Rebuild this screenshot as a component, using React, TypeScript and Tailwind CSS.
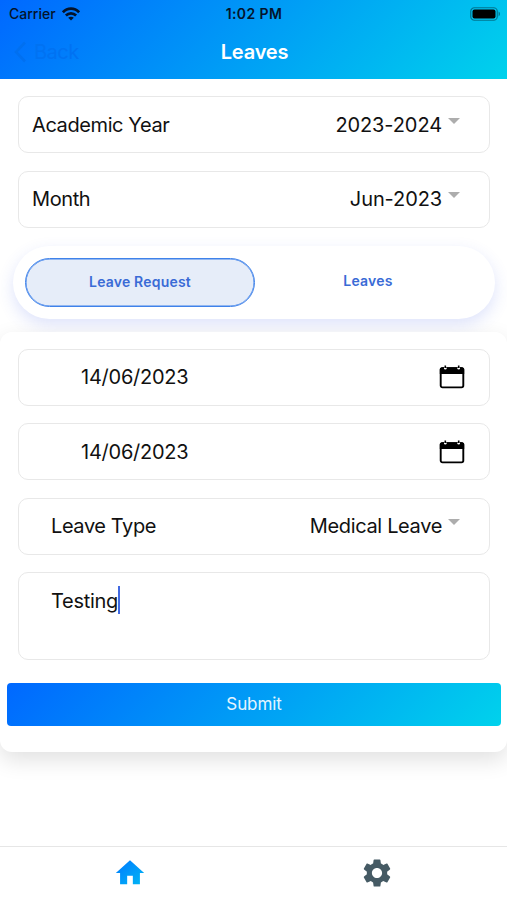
import { useState } from "react";

function WifiIcon() {
  return (
    <svg width="18" height="14" viewBox="0 0 18 14" fill="none" stroke="#04142b" strokeWidth="2.7">
      <path d="M0.9 5.3C5.4 0.5 12.6 0.5 17.1 5.3" />
      <path d="M3.9 8.5C6.8 5.6 11.2 5.6 14.1 8.5" />
      <path d="M9 13.6L6.2 10.7C7.8 9.3 10.2 9.3 11.8 10.7Z" fill="#04142b" stroke="none" />
    </svg>
  );
}

function BatteryIcon() {
  return (
    <svg width="31" height="14" viewBox="0 0 31 14" fill="none">
      <rect x="0.75" y="0.75" width="26.5" height="12.5" rx="3.6" stroke="#000" strokeOpacity="0.4" strokeWidth="1.2" />
      <rect x="2.5" y="2.5" width="23" height="9" rx="2" fill="#000" />
      <path d="M28.6 4.6C30.4 5.4 30.4 8.6 28.6 9.4Z" fill="#000" fillOpacity="0.45" />
    </svg>
  );
}

function CalendarIcon() {
  return (
    <svg width="26" height="24" viewBox="0 0 26 24">
      <rect x="1.7" y="3.2" width="22.6" height="19.2" rx="1.8" fill="#fff" stroke="#000" strokeWidth="1.9" />
      <path d="M0.8 9V4.5C0.8 3.3 1.8 2.3 3 2.3H23C24.2 2.3 25.2 3.3 25.2 4.5V9Z" fill="#000" />
      <circle cx="6.3" cy="3.2" r="1.3" fill="#fff" />
      <circle cx="19.7" cy="3.2" r="1.3" fill="#fff" />
      <path d="M6.3 0.4V3M19.7 0.4V3" stroke="#000" strokeWidth="1.6" />
    </svg>
  );
}

function Caret() {
  return (
    <svg width="12" height="6" viewBox="0 0 12 6" className="mb-[8px] ml-[6px]">
      <path d="M0 0H12L6 6Z" fill="#adadad" />
    </svg>
  );
}

function SelectField({ label, value, inset }: { label: string; value: string; inset?: boolean }) {
  return (
    <div
      className={`flex h-[57px] items-center justify-between rounded-[10px] border border-[#e8e8e8] bg-white pr-[29px] text-xl ${
        inset ? "pb-px pl-8" : "pl-[13px]"
      }`}
    >
      <span className="tracking-[-0.4px]">{label}</span>
      <span className="flex items-center">
        <span className={inset ? "tracking-[-0.35px]" : "tracking-[-0.1px]"}>{value}</span>
        <Caret />
      </span>
    </div>
  );
}

function DateField({ value }: { value: string }) {
  return (
    <div className="flex h-[57px] items-center justify-between rounded-[10px] border border-[#e8e8e8] bg-white pr-6 pl-[62px] text-xl">
      <span className="tracking-[-0.25px]">{value}</span>
      <CalendarIcon />
    </div>
  );
}

export default function App() {
  const [tab, setTab] = useState("request");

  return (
    <div className="flex h-[900px] w-[507px] flex-col overflow-hidden bg-white font-[Inter,sans-serif] text-[#111]">
      {/* status bar + title */}
      <header className="h-[79px] shrink-0 bg-linear-[135deg,#0068ff,#00d2ec]">
        <div className="grid h-7 grid-cols-3 items-center pr-[6px] pl-[9px] text-sm text-[#04142b]">
          <div className="flex items-center gap-[6px]">
            <span className="font-medium">Carrier</span>
            <WifiIcon />
          </div>
          <span className="pr-[2px] text-center font-semibold tracking-[0.4px]">1:02 PM</span>
          <div className="flex justify-end">
            <BatteryIcon />
          </div>
        </div>
        <div className="grid h-12 grid-cols-3 items-center pr-3 pl-[14px]">
          <button className="flex items-center gap-2 text-left text-xl tracking-[-0.5px] text-[#0072f2]">
            <svg width="12" height="22" viewBox="0 0 12 22" fill="none" stroke="#0070f0" strokeWidth="2.6">
              <path d="M11 1.5L2 11L11 20.5" />
            </svg>
            Back
          </button>
          <h1 className="text-center text-xl font-semibold tracking-[-0.2px] text-white">Leaves</h1>
        </div>
      </header>

      <section className="flex shrink-0 flex-col gap-[17.5px] pt-[17px] pr-[17px] pl-[18px]">
        <SelectField label="Academic Year" value="2023-2024" />
        <SelectField label="Month" value="Jun-2023" />
      </section>

      {/* segmented switch */}
      <div className="mt-[18.5px] mr-[12px] ml-[13px] flex h-[73px] shrink-0 rounded-full bg-white p-3 text-sm font-semibold text-[#3a6bd6] shadow-[0_6px_16px_rgba(60,90,230,0.17)]">
        <button
          onClick={() => setTab("request")}
          className={`h-[49px] w-[230px] rounded-full pb-[2px] tracking-[0.2px] ${
            tab === "request"
              ? "border border-[#3f82ea] bg-[#e6edf9] shadow-[inset_0_0_0_0.5px_#3f82ea]"
              : ""
          }`}
        >
          Leave Request
        </button>
        <button
          onClick={() => setTab("leaves")}
          className={`h-[47px] flex-1 rounded-full pr-[2px] pb-[2px] tracking-[0.2px] ${
            tab === "leaves"
              ? "border border-[#3f82ea] bg-[#e6edf9] shadow-[inset_0_0_0_0.5px_#3f82ea]"
              : ""
          }`}
        >
          Leaves
        </button>
      </div>

      {/* request form */}
      <form className="relative mt-[13px] h-[420px] shrink-0 rounded-[12px] bg-white pt-[16.5px] shadow-[0_8px_22px_rgba(0,0,0,0.12)]">
        <div className="flex flex-col gap-[17.5px] pr-[17px] pl-[18px]">
          <DateField value="14/06/2023" />
          <DateField value="14/06/2023" />
          <SelectField label="Leave Type" value="Medical Leave" inset />
          <div className="flex h-[88px] items-start rounded-[10px] border border-[#e8e8e8] pt-[13px] pl-8 text-xl">
            <span className="pt-px tracking-[-0.3px]">Testing</span>
            <span className="h-7 w-[2px] bg-[#4169e1]" />
          </div>
        </div>
        <button
          type="button"
          className="mx-[7px] mt-[22.5px] h-[43px] w-[494px] rounded-[4px] bg-linear-[135deg,#0068ff,#00d2ec] pt-[2px] text-[17px] tracking-[-0.1px] text-white/90"
        >
          Submit
        </button>
      </form>

      <nav className="mt-auto flex h-[54px] shrink-0 border-t border-[#e6e6e6] px-[6px]">
        <div className="flex flex-1 justify-center pt-[9px]">
          <svg width="34" height="34" viewBox="0 0 24 24">
            <defs>
              <linearGradient id="home" x1="0" y1="0" x2="1" y2="1">
                <stop offset="0" stopColor="#0078ff" />
                <stop offset="1" stopColor="#00b8f4" />
              </linearGradient>
            </defs>
            <path d="M10 20v-6h4v6h5v-8h3L12 3 2 12h3v8z" fill="url(#home)" />
          </svg>
        </div>
        <div className="flex flex-1 justify-center pt-[9px]">
          <svg width="34" height="34" viewBox="0 0 24 24" fill="#455a64">
            <path d="M19.14 12.94c.04-.3.06-.61.06-.94 0-.32-.02-.64-.07-.94l2.03-1.58c.18-.14.23-.41.12-.61l-1.92-3.32c-.12-.22-.37-.29-.59-.22l-2.39.96c-.5-.38-1.03-.7-1.62-.94l-.36-2.54c-.04-.24-.24-.41-.48-.41h-3.84c-.24 0-.43.17-.47.41l-.36 2.54c-.59.24-1.13.57-1.62.94l-2.39-.96c-.22-.08-.47 0-.59.22L2.74 8.87c-.12.21-.08.47.12.61l2.03 1.58c-.05.3-.09.63-.09.94s.02.64.07.94l-2.03 1.58c-.18.14-.23.41-.12.61l1.92 3.32c.12.22.37.29.59.22l2.39-.96c.5.38 1.03.7 1.62.94l.36 2.54c.05.24.24.41.48.41h3.84c.24 0 .44-.17.47-.41l.36-2.54c.59-.24 1.13-.56 1.62-.94l2.39.96c.22.08.47 0 .59-.22l1.92-3.32c.12-.22.07-.47-.12-.61l-2.01-1.58zM12 15.6c-1.98 0-3.6-1.62-3.6-3.6s1.62-3.6 3.6-3.6 3.6 1.62 3.6 3.6-1.62 3.6-3.6 3.6z" />
          </svg>
        </div>
      </nav>
    </div>
  );
}
